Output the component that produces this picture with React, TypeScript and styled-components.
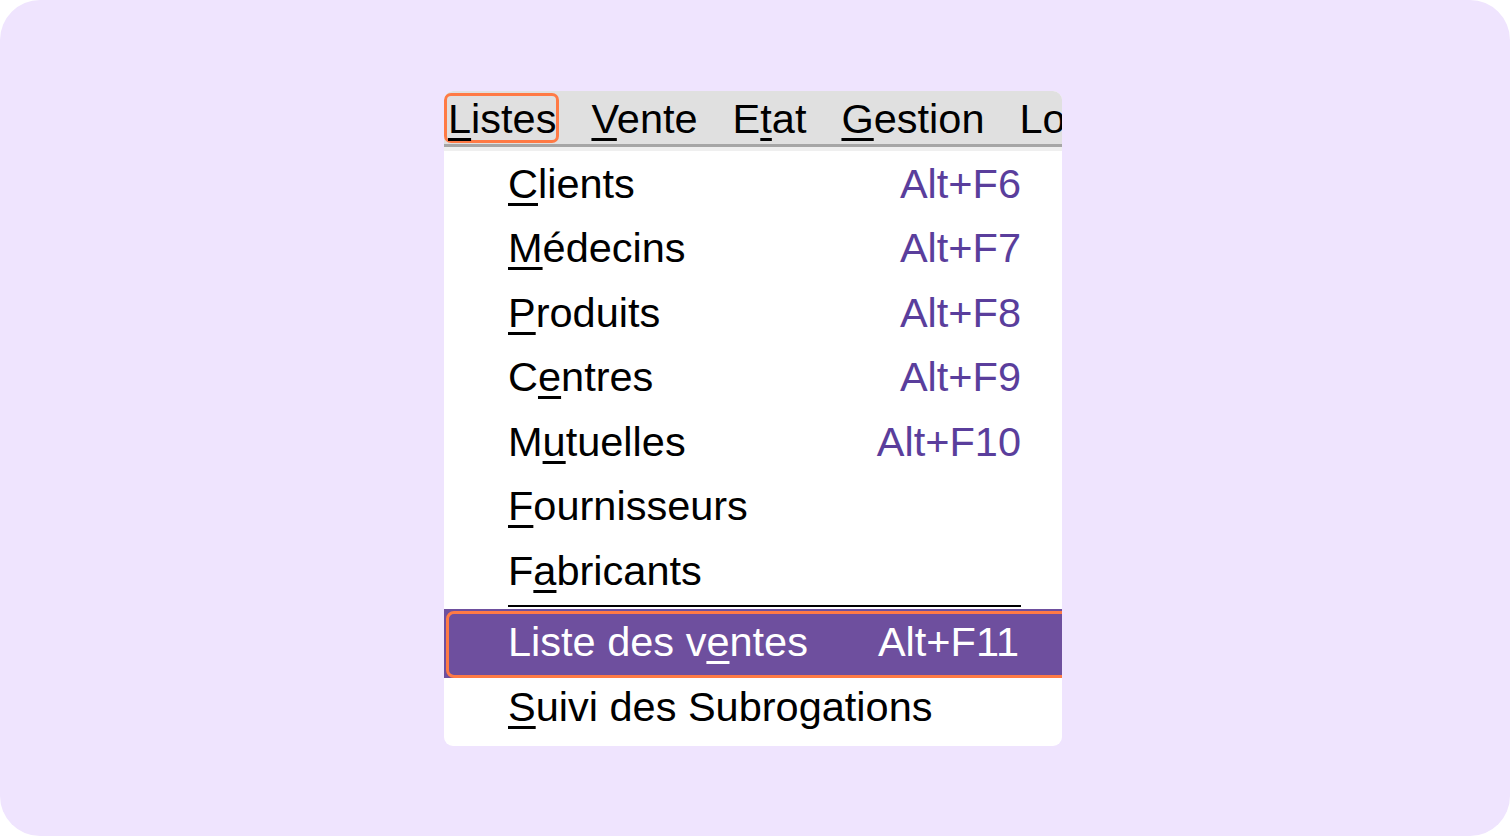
import React from "react";
import styled, { createGlobalStyle } from "styled-components";

const GlobalStyle = createGlobalStyle`
  html, body {
    margin: 0;
    padding: 0;
    background: #ffffff;
  }
  body {
    font-family: "Liberation Sans", Arial, sans-serif;
  }
`;

type Item = {
  label: string;
  key: number;
  shortcut?: string;
};

const items: Item[] = [
  { label: "Clients", key: 0, shortcut: "Alt+F6" },
  { label: "Médecins", key: 0, shortcut: "Alt+F7" },
  { label: "Produits", key: 0, shortcut: "Alt+F8" },
  { label: "Centres", key: 1, shortcut: "Alt+F9" },
  { label: "Mutuelles", key: 1, shortcut: "Alt+F10" },
  { label: "Fournisseurs", key: 0 },
  { label: "Fabricants", key: 1 },
];

const titles: { label: string; key: number | null }[] = [
  { label: "Listes", key: 0 },
  { label: "Vente", key: 0 },
  { label: "Etat", key: 1 },
  { label: "Gestion", key: 0 },
  { label: "Lo", key: null },
];

// underline one letter, like a windows mnemonic
const Mnemonic = ({ text, at }: { text: string; at: number | null }) => {
  if (at === null) return <>{text}</>;
  return (
    <>
      {text.slice(0, at)}
      <Key>{text[at]}</Key>
      {text.slice(at + 1)}
    </>
  );
};

const App = () => {
  return (
    <>
      <GlobalStyle />
      <Stage>
        <Panel>
          <MenuBar>
            {titles.map((t, i) => (
              <MenuTitle key={t.label} $active={i === 0}>
                <Mnemonic text={t.label} at={t.key} />
              </MenuTitle>
            ))}
          </MenuBar>
          <List>
            {items.map((it) => (
              <Row key={it.label}>
                <Label>
                  <Mnemonic text={it.label} at={it.key} />
                </Label>
                {it.shortcut && <Shortcut>{it.shortcut}</Shortcut>}
              </Row>
            ))}
            <Separator />
            <HighlightRow>
              <Label>
                <Mnemonic text="Liste des ventes" at={11} />
              </Label>
              <Shortcut $light>Alt+F11</Shortcut>
            </HighlightRow>
            <LastRow>
              <Label>
                <Mnemonic text="Suivi des Subrogations" at={0} />
              </Label>
            </LastRow>
          </List>
        </Panel>
      </Stage>
    </>
  );
};

const Stage = styled.div`
  width: 1510px;
  height: 836px;
  border-radius: 40px;
  background: #efe4fe;
  display: flex;
  align-items: center;
  justify-content: center;
`;

const Panel = styled.div`
  width: 618px;
  margin-left: -4px;
  margin-top: 1px;
  background: #ffffff;
  border-radius: 9px;
  overflow: hidden;
  font-size: 41.5px;
  color: #000000;
`;

const MenuBar = styled.div`
  height: 53px;
  background: #e0e0e0;
  border-bottom: 3px solid #a6a6a6;
  display: flex;
  align-items: center;
  gap: 28px;
  white-space: nowrap;
  overflow: hidden;
`;

const MenuTitle = styled.div<{ $active?: boolean }>`
  flex: none;
  height: 50px;
  line-height: 52px;
  padding: 0 3px 0 4px;
  border-radius: 7px;
  box-shadow: ${(p) => (p.$active ? "inset 0 0 0 3px #ff7a45" : "none")};
`;

const Key = styled.span`
  text-decoration: underline;
  text-decoration-thickness: 3px;
  text-underline-offset: 5px;
`;

const List = styled.div`
  border-top: 4px solid #efefef;
  padding-bottom: 10px;
`;

const Row = styled.div`
  height: 64.5px;
  display: flex;
  align-items: center;
  justify-content: space-between;
  padding: 0 41px 0 64px;
  white-space: nowrap;
`;

const Label = styled.span`
  line-height: 1;
`;

const Shortcut = styled.span<{ $light?: boolean }>`
  line-height: 1;
  color: ${(p) => (p.$light ? "#ffffff" : "#5a3e9c")};
`;

const Separator = styled.div`
  height: 2px;
  margin: 2px 41px 0 64px;
  background: #000000;
`;

const HighlightRow = styled(Row)`
  position: relative;
  height: 69px;
  margin-top: 2.5px;
  padding-right: 43px;
  padding-bottom: 3px;
  box-sizing: border-box;
  background: #6e4f9e;
  color: #ffffff;

  &::after {
    content: "";
    position: absolute;
    top: 2px;
    left: 2px;
    right: -10px;
    bottom: 0;
    border: 3.5px solid #ff7a45;
    border-radius: 8px;
    pointer-events: none;
  }
`;

const LastRow = styled(Row)`
  height: 58px;
`;

export default App;
